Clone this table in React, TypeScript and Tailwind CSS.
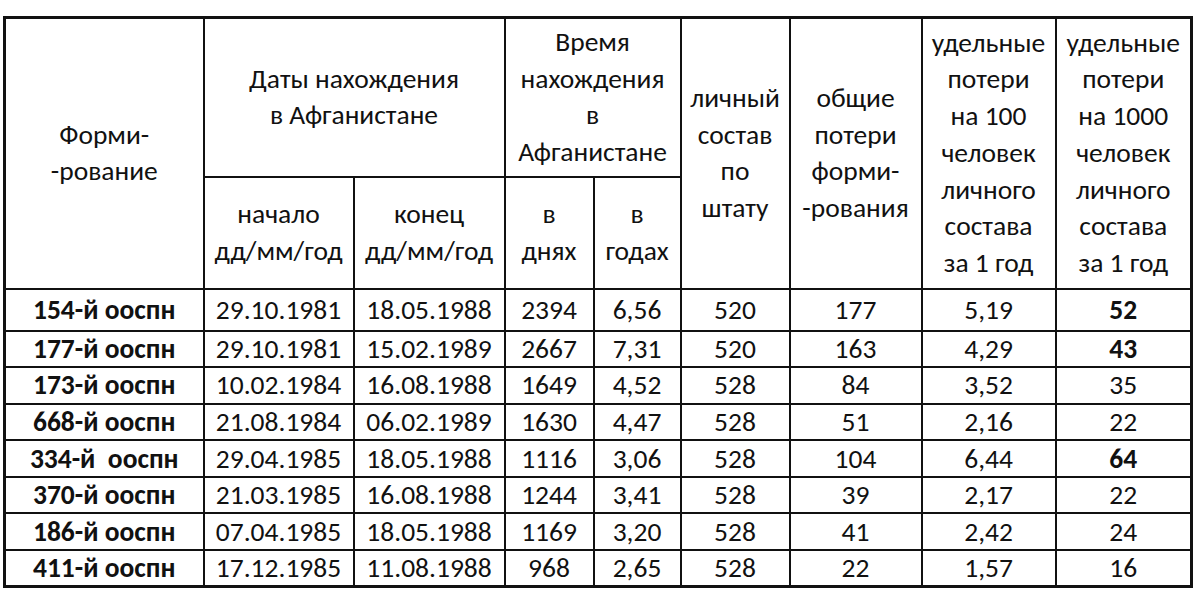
const rows = [
  ["154-й ооспн", "29.10.1981", "18.05.1988", "2394", "6,56", "520", "177", "5,19", "52", true],
  ["177-й ооспн", "29.10.1981", "15.02.1989", "2667", "7,31", "520", "163", "4,29", "43", true],
  ["173-й ооспн", "10.02.1984", "16.08.1988", "1649", "4,52", "528", "84", "3,52", "35", false],
  ["668-й ооспн", "21.08.1984", "06.02.1989", "1630", "4,47", "528", "51", "2,16", "22", false],
  ["334-й  ооспн", "29.04.1985", "18.05.1988", "1116", "3,06", "528", "104", "6,44", "64", true],
  ["370-й ооспн", "21.03.1985", "16.08.1988", "1244", "3,41", "528", "39", "2,17", "22", false],
  ["186-й ооспн", "07.04.1985", "18.05.1988", "1169", "3,20", "528", "41", "2,42", "24", false],
  ["411-й ооспн", "17.12.1985", "11.08.1988", "968", "2,65", "528", "22", "1,57", "16", false],
] as const;

const cell = "border-2 border-[#111] text-center align-middle p-0";
const head = `${cell} font-normal`;

export default function App() {
  return (
    <div
      className="min-h-[596px] w-[1200px] bg-white pl-[3px] pt-[16px] text-[#111]"
      style={{ fontFamily: "Carlito, Lato, 'Open Sans', sans-serif" }}
    >
      <table className="w-[1189px] table-fixed border-collapse border-[3px] border-[#111] text-[27.5px]">
        <colgroup>
          <col className="w-[199px]" />
          <col className="w-[150px]" />
          <col className="w-[151px]" />
          <col className="w-[89px]" />
          <col className="w-[87px]" />
          <col className="w-[109px]" />
          <col className="w-[132px]" />
          <col className="w-[134px]" />
          <col className="w-[136px]" />
        </colgroup>
        <thead className="leading-[36.7px]">
          <tr className="h-[159px]">
            <th rowSpan={2} className={head}>
              Форми-<br />-рование
            </th>
            <th colSpan={2} className={head}>
              Даты нахождения<br />в Афганистане
            </th>
            <th colSpan={2} className={head}>
              Время<br />нахождения<br />в<br />Афганистане
            </th>
            <th rowSpan={2} className={head}>
              личный<br />состав<br />по<br />штату
            </th>
            <th rowSpan={2} className={head}>
              общие<br />потери<br />форми-<br />-рования
            </th>
            <th rowSpan={2} className={head}>
              удельные<br />потери<br />на 100<br />человек<br />личного<br />состава<br />за 1 год
            </th>
            <th rowSpan={2} className={head}>
              удельные<br />потери<br />на 1000<br />человек<br />личного<br />состава<br />за 1 год
            </th>
          </tr>
          <tr className="h-[112px]">
            <th className={head}>
              начало<br />дд/мм/год
            </th>
            <th className={head}>
              конец<br />дд/мм/год
            </th>
            <th className={head}>
              в<br />днях
            </th>
            <th className={head}>
              в<br />годах
            </th>
          </tr>
        </thead>
        <tbody className="leading-[28px]">
          {rows.map((r, i) => (
            <tr key={i} className={i === 0 ? "h-[42px]" : "h-[36.6px]"}>
              <td className={`${cell} font-bold whitespace-pre`}>{r[0]}</td>
              <td className={cell}>{r[1]}</td>
              <td className={cell}>{r[2]}</td>
              <td className={cell}>{r[3]}</td>
              <td className={cell}>{r[4]}</td>
              <td className={cell}>{r[5]}</td>
              <td className={cell}>{r[6]}</td>
              <td className={cell}>{r[7]}</td>
              <td className={`${cell} ${r[9] ? "font-bold" : ""}`}>{r[8]}</td>
            </tr>
          ))}
        </tbody>
      </table>
    </div>
  );
}
